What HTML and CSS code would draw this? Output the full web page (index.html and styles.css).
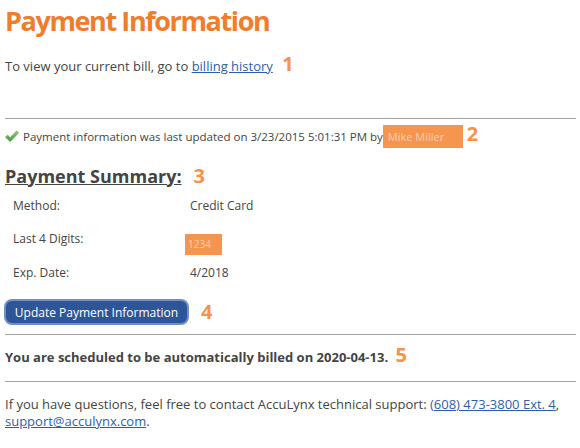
FILE: index.html
```html
<!DOCTYPE html>
<html>
<head>
<meta charset="utf-8">
<link rel="stylesheet" href="styles.css">
</head>
<body>
<div class="page">
  <h1 class="title">Payment Information</h1>
  <p class="intro">To view your current bill, go to <a href="#" class="link">billing history</a> <span class="mark mark-1">1</span></p>
  <hr class="rule rule-top">
  <p class="updated">
    <svg class="check" width="14" height="13" viewBox="0 0 14 13">
      <defs>
        <linearGradient id="g" x1="0" y1="0" x2="0" y2="1">
          <stop offset="0" stop-color="#8fd17a"/>
          <stop offset="1" stop-color="#3e9b35"/>
        </linearGradient>
      </defs>
      <path d="M0.6 7.2 L2.6 5.2 L5.2 7.7 L11.6 1.0 L13.4 2.9 L5.2 11.6 Z" fill="url(#g)" stroke="#3d8a34" stroke-width="0.6" stroke-linejoin="round"/>
    </svg>Payment information was last updated on 3/23/2015 5:01:31 PM by<span class="redact redact-name">Mike Miller</span> <span class="mark mark-2">2</span>
  </p>
  <h2 class="summary-title">Payment Summary:</h2><span class="mark mark-3">3</span>
  <div class="summary">
    <div class="label">Method:</div><div class="value">Credit Card</div>
    <div class="label">Last 4 Digits:</div><div class="value"><span class="redact redact-digits">1234</span></div>
    <div class="label">Exp. Date:</div><div class="value">4/2018</div>
  </div>
  <div class="actions">
    <button class="btn" type="button">Update Payment Information</button>
    <span class="mark mark-4">4</span>
  </div>
  <hr class="rule rule-mid">
  <p class="schedule"><strong>You are scheduled to be automatically billed on 2020-04-13.</strong> <span class="mark mark-5">5</span></p>
  <hr class="rule rule-bottom">
  <p class="contact">If you have questions, feel free to contact AccuLynx technical support: <a href="#" class="link">(608) 473-3800 Ext. 4</a>, <a href="#" class="link">support@acculynx.com</a>.</p>
</div>
</body>
</html>
```
FILE: styles.css
```css
html, body {
  margin: 0;
  padding: 0;
  background: #ffffff;
}
body {
  font-family: "Open Sans", "DejaVu Sans", sans-serif;
  color: #444444;
}
.page {
  padding: 0 4px 0 5px;
  position: relative;
}
.title {
  margin: 3.6px 0 0 0;
  font-size: 27px;
  line-height: 34px;
  font-weight: 700;
  letter-spacing: -1.4px;
  color: #f07d2b;
}
.intro {
  margin: 19.4px 0 0 0;
  font-size: 13px;
  line-height: 18px;
}
.link {
  color: #2b5fad;
  text-decoration: underline;
}
.mark {
  color: #f5924c;
  font-weight: 700;
  font-size: 20px;
  line-height: 0;
}
.mark-1 { margin-left: 6px; }
.rule {
  border: 0;
  border-top: 1px solid #a3a3a3;
  height: 0;
  margin: 0;
}
.rule-top { margin-top: 43px; }
.updated {
  margin: 5.8px 0 0 0;
  font-size: 11.5px;
  line-height: 23px;
}
.check {
  vertical-align: -2px;
  margin-right: 4px;
}
.redact {
  display: inline-block;
  background: #f5954f;
  color: rgba(255, 255, 255, 0.55);
  line-height: 17px;
  padding: 3px 0;
}
.redact-name {
  width: 80px;
  box-sizing: border-box;
  padding-left: 5px;
  font-size: 11px;
}
.mark-2 { margin-left: 1px; }
.summary-title {
  display: inline-block;
  margin: 14.8px 0 0 0;
  font-size: 18px;
  line-height: 26px;
  font-weight: 700;
  text-decoration: underline;
  color: #444444;
}
.mark-3 { margin-left: 12px; }
.summary {
  display: grid;
  grid-template-columns: 177px 1fr;
  padding-left: 8px;
  font-size: 12px;
  line-height: 33.5px;
}
.redact-digits {
  width: 37px;
  padding-left: 3px;
  box-sizing: border-box;
  margin-left: -5px;
  font-size: 10px;
  line-height: 21px;
  padding-top: 0;
  padding-bottom: 0;
  vertical-align: -5px;
}
.actions {
  margin-top: 10.2px;
  margin-left: -1px;
  display: flex;
  align-items: center;
  gap: 12px;
  height: 26px;
}
.btn {
  height: 26px;
  width: 185px;
  box-sizing: border-box;
  border: 2px solid #6f8fc6;
  border-radius: 8px;
  background: #2d5597;
  color: #ffffff;
  font-family: "Open Sans", "DejaVu Sans", sans-serif;
  font-size: 12px;
  padding: 0;
}
.mark-4 { line-height: 26px; }
.rule-mid { margin-top: 9px; }
.schedule {
  margin: 13px 0 0 0;
  font-size: 13px;
  line-height: 18px;
}
.schedule strong { font-weight: 700; }
.mark-5 { margin-left: 4px; }
.rule-bottom { margin-top: 14.5px; }
.contact {
  margin: 14px 0 0 0;
  font-size: 13px;
  line-height: 17.5px;
}
```
